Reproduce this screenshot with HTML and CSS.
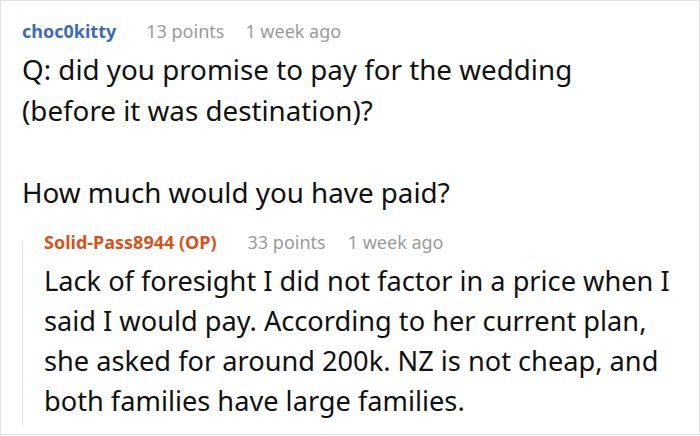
FILE: index.html
```html
<!DOCTYPE html>
<html>
<head>
<meta charset="utf-8">
<link rel="stylesheet" href="styles.css">
</head>
<body>
<div class="frame">
  <div class="comment">
    <div class="meta">
      <span class="user">choc0kitty</span>
      <span class="info">13 points</span>
      <span class="info">1 week ago</span>
    </div>
    <div class="body">
      <p>Q: did you promise to pay for the wedding<br>(before it was destination)?</p>
      <p>How much would you have paid?</p>
    </div>
    <div class="reply">
      <div class="meta">
        <span class="user op">Solid-Pass8944 (OP)</span>
        <span class="info">33 points</span>
        <span class="info">1 week ago</span>
      </div>
      <div class="body small">
        <p>Lack of foresight I did not factor in a price when I<br>said I would pay. According to her current plan,<br>she asked for around 200k. NZ is not cheap, and<br>both families have large families.</p>
      </div>
    </div>
  </div>
</div>
</body>
</html>
```
FILE: styles.css
```css
* { box-sizing: border-box; }
html, body { margin: 0; padding: 0; background: #fff; }
body { font-family: "Noto Sans", "Open Sans", sans-serif; color: #111; }
.frame {
  width: 700px;
  height: 435px;
  border: 1px solid #e2e2e2;
  overflow: hidden;
}
.comment { padding: 17px 0 0 21px; }
.meta { display: flex; font-size: 18px; line-height: 26px; }
.user { font-weight: 700; color: #3b6bb8; margin-right: 30px; }
.user.op { color: #d4531c; margin-right: 31px; }
.info { color: #9a9a9a; margin-right: 21px; }
.body { margin-top: 5px; white-space: nowrap; }
.body p { margin: 0; font-size: 27.75px; line-height: 41px; }
.body p + p { margin-top: 41px; }
.reply {
  position: relative;
  margin-top: 16px;
  padding-left: 22px;
}
.reply::before {
  content: "";
  position: absolute;
  left: 0;
  top: 12px;
  bottom: -4px;
  border-left: 1px solid #e0e0e0;
}
.reply .body { margin-top: 6px; }
.reply .info { margin-right: 22px; }
.body.small p { font-size: 27.2px; line-height: 40px; }
```
